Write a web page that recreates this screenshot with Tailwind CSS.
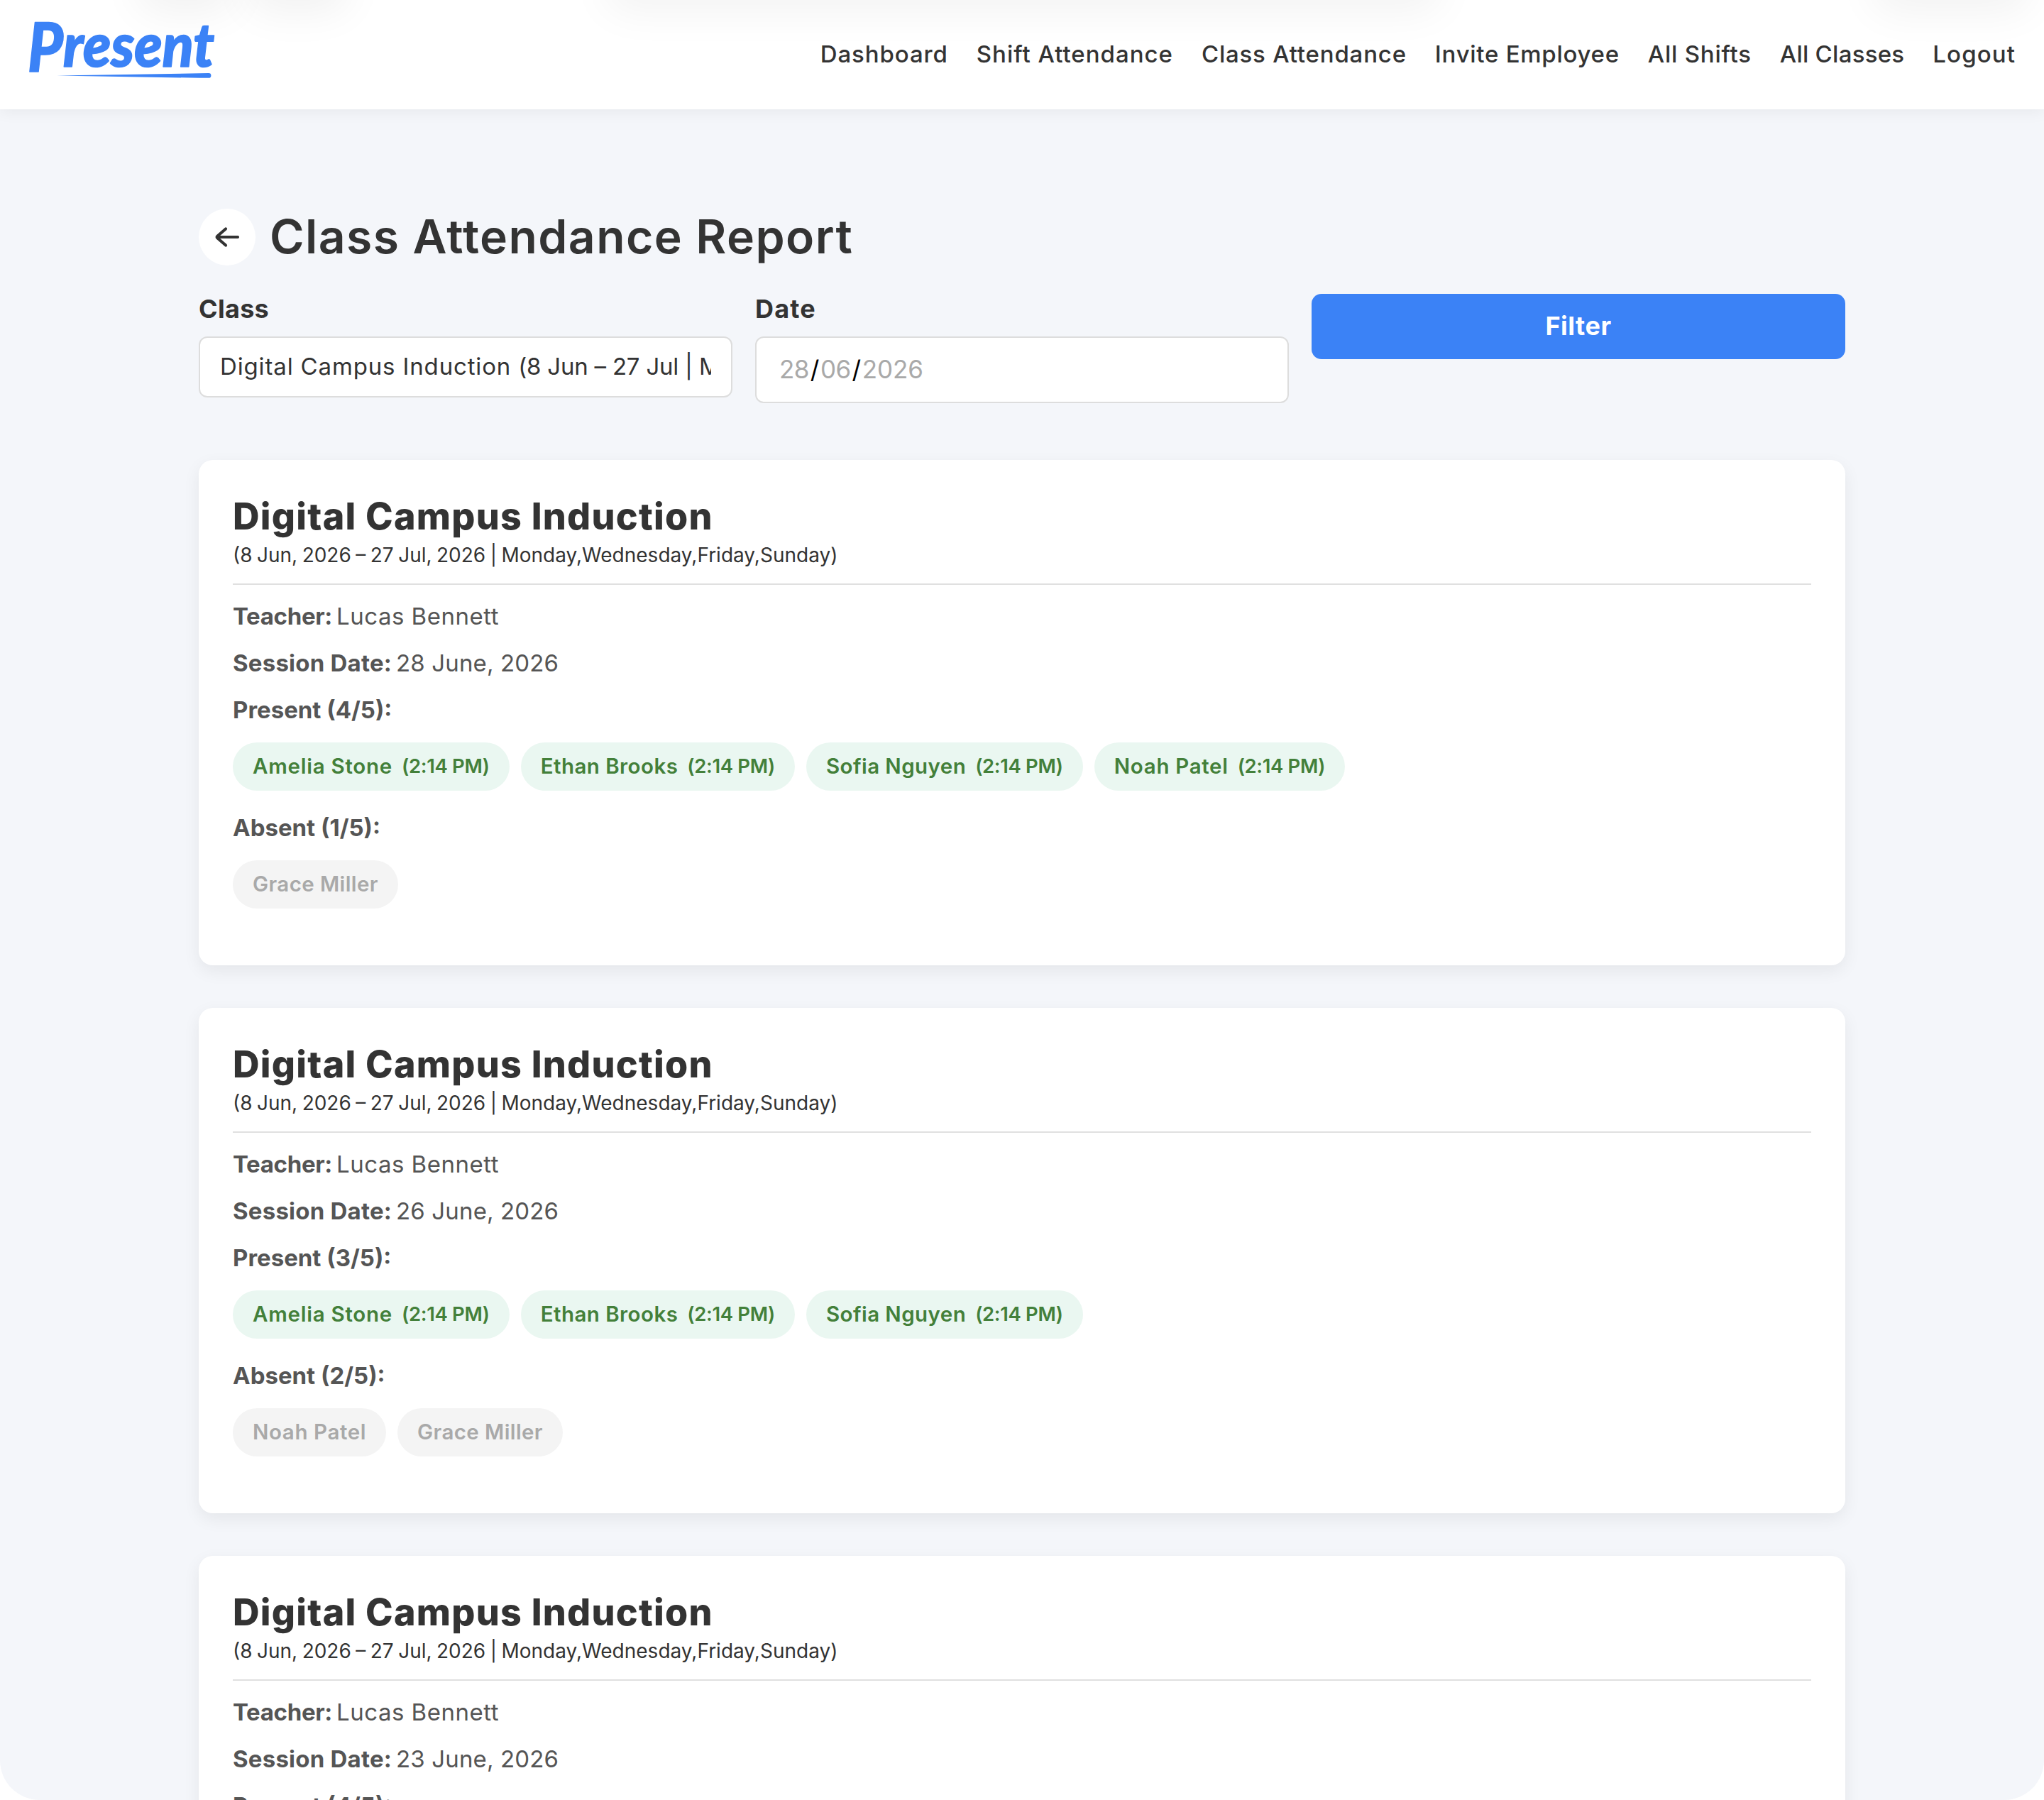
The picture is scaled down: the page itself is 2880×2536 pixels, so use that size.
<!DOCTYPE html>
<html lang="en">
<head>
<meta charset="utf-8">
<title>Class Attendance Report</title>
<script src="https://cdn.jsdelivr.net/npm/@tailwindcss/browser@4"></script>
</head>
<body class="h-[2536px] overflow-hidden bg-white font-['Inter',sans-serif] text-[#333]">
<div class="relative h-[2536px] overflow-hidden rounded-b-[56px] bg-[#f4f6fa]">

  <header class="relative flex h-[154px] justify-between bg-white px-10 shadow-[0_4px_20px_rgba(0,0,0,0.055)]">
    <!-- soft shadows of the floating toolbars above the page -->
    <div class="absolute inset-0 overflow-hidden">
      <div class="absolute -top-20 left-[195px] h-20 w-[135px] rounded-3xl shadow-[0_16px_60px_rgba(0,0,0,0.06)]"></div>
      <div class="absolute -top-20 left-[350px] h-20 w-[140px] rounded-3xl shadow-[0_16px_60px_rgba(0,0,0,0.06)]"></div>
      <div class="absolute -top-20 left-[855px] h-20 w-[1175px] rounded-3xl shadow-[0_16px_60px_rgba(0,0,0,0.05)]"></div>
      <div class="absolute -top-20 left-[2640px] h-20 w-[220px] rounded-3xl shadow-[0_16px_60px_rgba(0,0,0,0.055)]"></div>
    </div>
    <svg class="relative mt-6 h-[92px] w-[270px] shrink-0" viewBox="40 24 270 92" fill="#3b82f6">
      <g font-family="Lato, sans-serif" font-weight="900" font-style="italic" stroke="#3b82f6" stroke-width="1.6" stroke-linejoin="round">
        <text x="39" y="101" font-size="96" textLength="50" lengthAdjust="spacingAndGlyphs">P</text>
        <text x="89" y="94" font-size="85" textLength="213" lengthAdjust="spacingAndGlyphs">resent</text>
      </g>
      <path d="M80 106.6 L294 103 a3.4 3.4 0 0 1 0 6.8 L281 109.8 Z"/>
    </svg>
    <nav class="relative flex gap-10 text-[33px] leading-[152px] font-medium whitespace-nowrap">
      <a class="tracking-[0.88px]">Dashboard</a>
      <a class="tracking-[0.98px]">Shift Attendance</a>
      <a class="tracking-[0.8px]">Class Attendance</a>
      <a class="tracking-[0.73px]">Invite Employee</a>
      <a class="tracking-[0.76px]">All Shifts</a>
      <a class="tracking-[0.25px]">All Classes</a>
      <a class="tracking-[1.1px]">Logout</a>
    </nav>
  </header>

  <main class="mx-auto w-[2320px] pt-[140px]">
    <div class="flex h-20 items-center gap-5">
      <a class="flex size-20 items-center justify-center rounded-full bg-white">
        <svg class="h-8 w-9" viewBox="0 0 36 32" fill="none" stroke="#333" stroke-width="4.2" stroke-linecap="round" stroke-linejoin="round"><path d="M33 16H4M16 4.5 L4.5 14.5 Q3 16 4.5 17.5 L16 27.5"/></svg>
      </a>
      <h1 class="pb-[3px] text-[66px] leading-[78px] font-semibold tracking-[1.42px]">Class Attendance Report</h1>
    </div>

    <form class="mt-10 grid grid-cols-3 items-start gap-8">
      <div>
        <label class="block text-[36px] leading-[42px] font-bold tracking-[0.28px]">Class</label>
        <div class="mt-[18px] h-[86px] rounded-xl border-2 border-[#ddd] bg-white px-7">
          <div class="overflow-hidden text-[33px] leading-20 whitespace-nowrap"><span class="tracking-[0.85px]">Digital Campus Induction </span><span class="tracking-[-0.22px]">(8 Jun – 27 Jul | Mo</span></div>
        </div>
      </div>
      <div>
        <label class="block text-[36px] leading-[42px] font-bold tracking-[1.2px]">Date</label>
        <div class="mt-[18px] flex h-[94px] rounded-xl border-2 border-[#ddd] bg-white px-8 text-[35px] leading-[88px] text-[#a9a9a9]">
          <span class="tracking-[-0.5px]">28</span><span class="w-4 text-center text-black">/</span><span class="tracking-[-0.5px]">06</span><span class="w-4 text-center text-black">/</span><span class="tracking-[-0.12px]">2026</span>
        </div>
      </div>
      <button type="button" class="h-[92px] rounded-[14px] bg-[#3b82f6] pb-1 text-center text-[36px] leading-[91px] font-bold tracking-[0.5px] text-white">Filter</button>
    </form>

    <div class="mt-20 flex flex-col gap-15">
      <section class="h-[712px] rounded-[20px] bg-white px-12 pt-12 shadow-[0_8px_24px_rgba(0,0,0,0.065)]">
        <h2 class="text-[52px] leading-[63px] font-extrabold tracking-[1.25px]">Digital Campus Induction</h2>
        <p class="border-b-2 border-[#e0e0e0] pb-4 text-[28px] leading-[47px] [word-spacing:-1.4px]">(8 Jun, 2026 – 27 Jul, 2026 | Monday,Wednesday,Friday,Sunday)</p>
        <div class="mt-[18px] flex flex-col gap-[14px] text-[33px] leading-[52px] text-[#555]">
          <p class="flex gap-[6px]"><strong class="font-bold tracking-[-0.33px]">Teacher:</strong><span class="tracking-[0.5px]">Lucas Bennett</span></p>
          <p class="flex gap-[6px]"><strong class="font-bold tracking-[0.22px]">Session Date:</strong><span class="tracking-[0.14px]">28 June, 2026</span></p>
          <p class="font-bold">Present (4/5):</p>
        </div>
        <div class="mt-5 flex gap-4 text-[29.5px] leading-[67px] font-semibold text-[#43803a]">
          <div class="flex h-[68px] gap-[13px] rounded-full bg-[#eaf7f1] px-7"><span class="tracking-[0.75px]">Amelia Stone</span><span class="text-[27.5px] tracking-[-0.35px]">(2:14 PM)</span></div>
          <div class="flex h-[68px] gap-[13px] rounded-full bg-[#eaf7f1] px-7"><span class="tracking-[0.45px]">Ethan Brooks</span><span class="text-[27.5px] tracking-[-0.35px]">(2:14 PM)</span></div>
          <div class="flex h-[68px] gap-[13px] rounded-full bg-[#eaf7f1] px-7"><span class="tracking-[0.43px]">Sofia Nguyen</span><span class="text-[27.5px] tracking-[-0.35px]">(2:14 PM)</span></div>
          <div class="flex h-[68px] gap-[13px] rounded-full bg-[#eaf7f1] px-7"><span class="tracking-[0.68px]">Noah Patel</span><span class="text-[27.5px] tracking-[-0.35px]">(2:14 PM)</span></div>
        </div>
        <p class="mt-[26px] text-[33px] leading-[52px] font-bold text-[#555]">Absent (1/5):</p>
        <div class="mt-5 flex gap-4 text-[29.5px] leading-[67px] font-semibold text-[#a9a9a9]">
          <div class="h-[68px] rounded-full bg-[#f4f4f4] px-7 tracking-[0.4px]">Grace Miller</div>
        </div>
      </section>

      <section class="h-[712px] rounded-[20px] bg-white px-12 pt-12 shadow-[0_8px_24px_rgba(0,0,0,0.065)]">
        <h2 class="text-[52px] leading-[63px] font-extrabold tracking-[1.25px]">Digital Campus Induction</h2>
        <p class="border-b-2 border-[#e0e0e0] pb-4 text-[28px] leading-[47px] [word-spacing:-1.4px]">(8 Jun, 2026 – 27 Jul, 2026 | Monday,Wednesday,Friday,Sunday)</p>
        <div class="mt-[18px] flex flex-col gap-[14px] text-[33px] leading-[52px] text-[#555]">
          <p class="flex gap-[6px]"><strong class="font-bold tracking-[-0.33px]">Teacher:</strong><span class="tracking-[0.5px]">Lucas Bennett</span></p>
          <p class="flex gap-[6px]"><strong class="font-bold tracking-[0.22px]">Session Date:</strong><span class="tracking-[0.14px]">26 June, 2026</span></p>
          <p class="font-bold">Present (3/5):</p>
        </div>
        <div class="mt-5 flex gap-4 text-[29.5px] leading-[67px] font-semibold text-[#43803a]">
          <div class="flex h-[68px] gap-[13px] rounded-full bg-[#eaf7f1] px-7"><span class="tracking-[0.75px]">Amelia Stone</span><span class="text-[27.5px] tracking-[-0.35px]">(2:14 PM)</span></div>
          <div class="flex h-[68px] gap-[13px] rounded-full bg-[#eaf7f1] px-7"><span class="tracking-[0.45px]">Ethan Brooks</span><span class="text-[27.5px] tracking-[-0.35px]">(2:14 PM)</span></div>
          <div class="flex h-[68px] gap-[13px] rounded-full bg-[#eaf7f1] px-7"><span class="tracking-[0.43px]">Sofia Nguyen</span><span class="text-[27.5px] tracking-[-0.35px]">(2:14 PM)</span></div>
        </div>
        <p class="mt-[26px] text-[33px] leading-[52px] font-bold text-[#555]">Absent (2/5):</p>
        <div class="mt-5 flex gap-4 text-[29.5px] leading-[67px] font-semibold text-[#a9a9a9]">
          <div class="h-[68px] rounded-full bg-[#f4f4f4] px-7 tracking-[0.6px]">Noah Patel</div>
          <div class="h-[68px] rounded-full bg-[#f4f4f4] px-7 tracking-[0.4px]">Grace Miller</div>
        </div>
      </section>

      <section class="h-[712px] rounded-[20px] bg-white px-12 pt-12 shadow-[0_8px_24px_rgba(0,0,0,0.065)]">
        <h2 class="text-[52px] leading-[63px] font-extrabold tracking-[1.25px]">Digital Campus Induction</h2>
        <p class="border-b-2 border-[#e0e0e0] pb-4 text-[28px] leading-[47px] [word-spacing:-1.4px]">(8 Jun, 2026 – 27 Jul, 2026 | Monday,Wednesday,Friday,Sunday)</p>
        <div class="mt-[18px] flex flex-col gap-[14px] text-[33px] leading-[52px] text-[#555]">
          <p class="flex gap-[6px]"><strong class="font-bold tracking-[-0.33px]">Teacher:</strong><span class="tracking-[0.5px]">Lucas Bennett</span></p>
          <p class="flex gap-[6px]"><strong class="font-bold tracking-[0.22px]">Session Date:</strong><span class="tracking-[0.14px]">23 June, 2026</span></p>
          <p class="font-bold">Present (4/5):</p>
        </div>
      </section>
    </div>
  </main>
</div>
</body>
</html>
